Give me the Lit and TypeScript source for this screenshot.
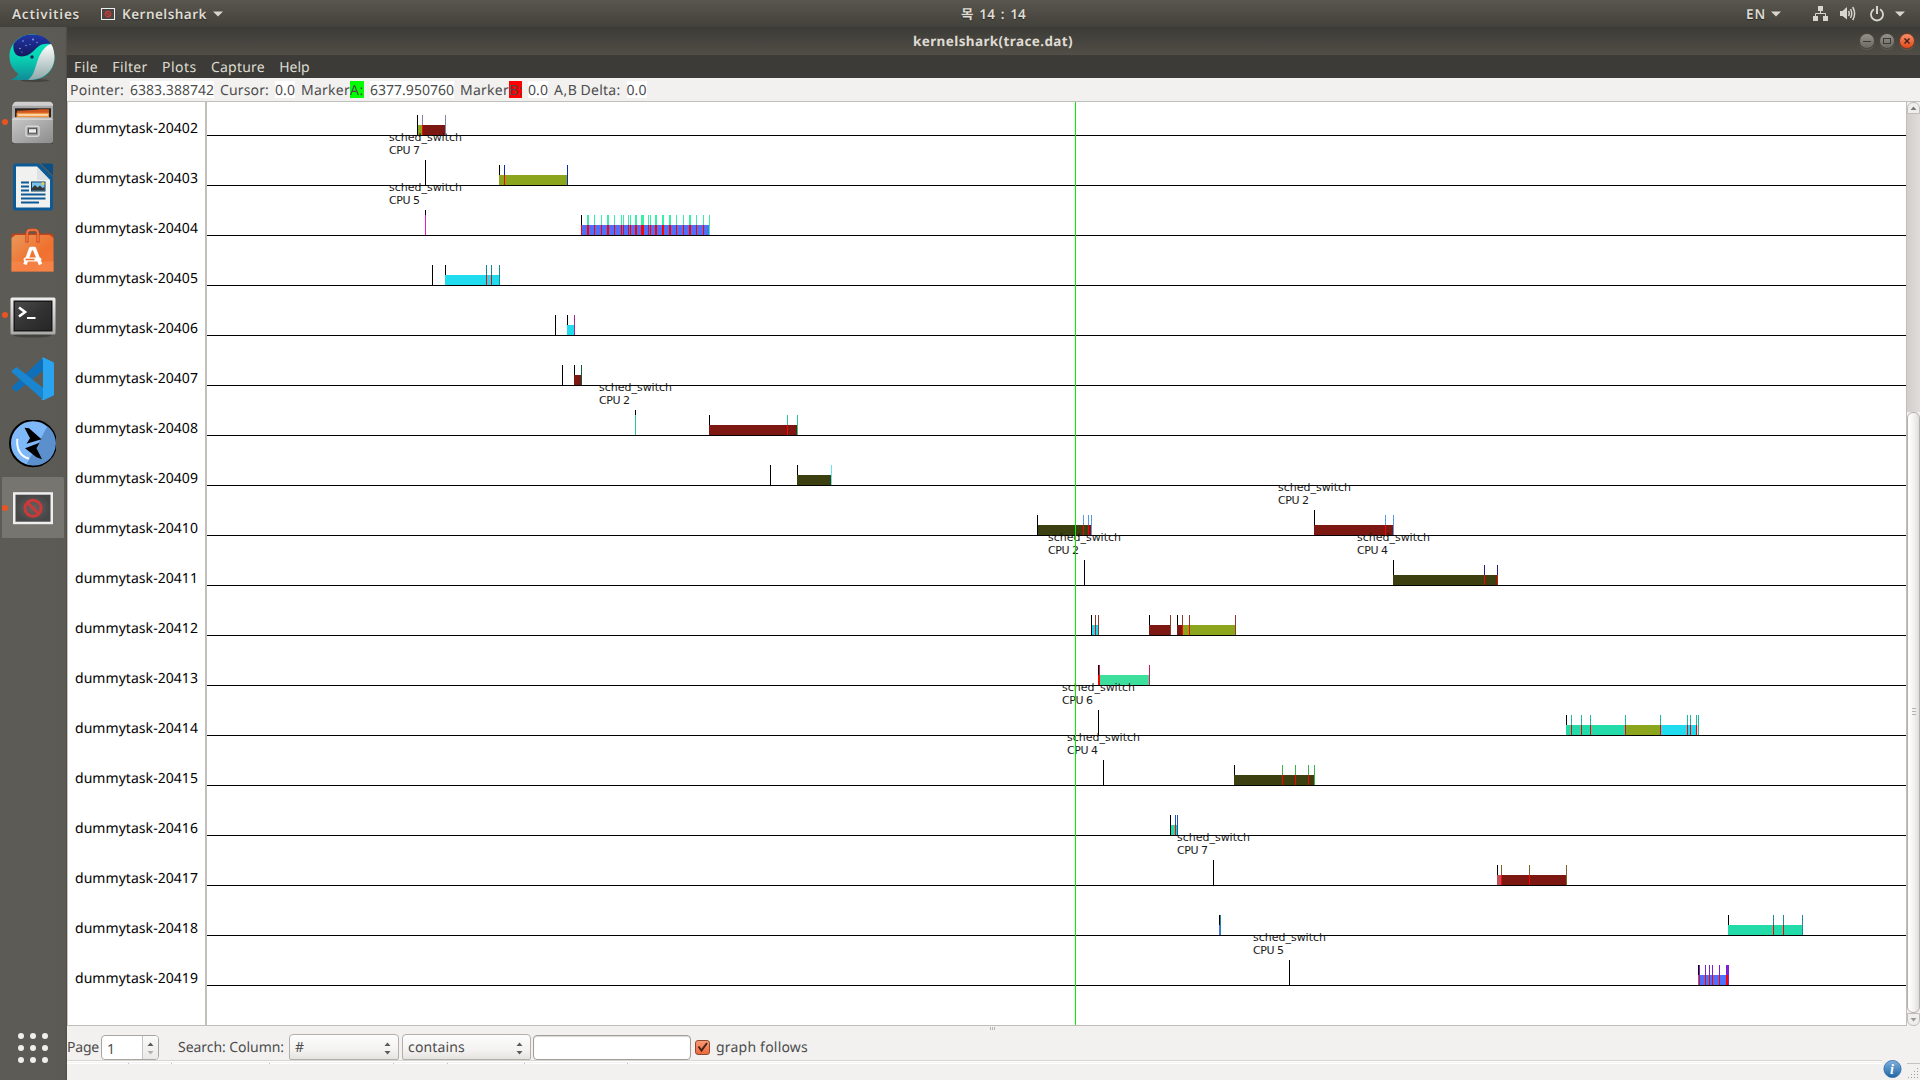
import { LitElement, html, svg, css } from "lit";
import { customElement, property } from "lit/decorators.js";

/** Text run whose tracking is adjusted so that it takes a given width. */
@customElement("fit-text")
class FitText extends LitElement {
  static styles = css`
    :host { display: block; flex: none; white-space: pre; text-rendering: geometricPrecision; }
    .run { display: inline-block; }
  `;
  @property() text = "";
  @property({ type: Number }) w = 0;
  render() { return html`<span class="run">${this.text}</span>`; }
  updated() {
    const run = this.renderRoot.querySelector(".run") as HTMLElement;
    const n = this.text.length;
    const natural = run.getBoundingClientRect().width;
    this.style.width = `${this.w}px`;
    run.style.letterSpacing = `${(this.w - natural) / n}px`;
  }
}

const fit = (text: string, w: number, cls = "") => html`<fit-text class=${cls} .text=${text} .w=${w}></fit-text>`;

const DARKRED = "#7d1712", OLIVE = "#8ba51d", BLUE = "#5070fa", CYAN = "#20dcee", MOSS = "#3c3f10", MINT = "#22dba8";

/** [x, width, colour] */
type Bar = [number, number, string];
type Row = {
  bars?: Bar[];
  black?: number[];      // start ticks, upper half
  full?: number[];       // black, full height
  tall?: number[];       // black, reaching up to a label
  color?: string;        // task colour
  mid?: (number | [number, number])[]; // task colour above, red below
  end?: number[];        // task colour, full height
  labels?: [number, string][];
  extra?: [number, number, number, number, string][]; // x, dy, w, h, fill
};

const ROWS: Row[] = [
  { bars: [[418, 4, OLIVE], [423, 22, DARKRED]], full: [417], color: "#7f86a8", mid: [422], end: [445] },
  { labels: [[389, "7"]], tall: [425], bars: [[499, 68, OLIVE]], black: [499], color: "#0a2ab0", mid: [504], end: [567] },
  { labels: [[389, "5"]], extra: [[425, -25, 1, 5, "#000"], [425, -20, 1, 20, "#e619d8"], [581, -10, 1, 10, "#f00"]],
    bars: [[581, 128, BLUE]], black: [581], color: "#36f0a4",
    mid: [[587, 2], 594, 601, [607, 2], 614, 621, 623, 628, 630, [635, 2], [641, 3], 648, 650, [655, 2], [662, 2], [669, 2], 676, 683, [689, 2], 696, 703],
    end: [709] },
  { full: [432], black: [445], bars: [[445, 54, CYAN]], color: "#128a90", mid: [486, 491], end: [499] },
  { full: [555], black: [567], bars: [[567, 7, CYAN]], color: "#a02a92", end: [574] },
  { full: [562], black: [574], bars: [[574, 7, DARKRED]], color: "#0f5c44", end: [581] },
  { labels: [[599, "2"]], extra: [[635, -25, 1, 5, "#000"]], black: [709], bars: [[709, 88, DARKRED]], color: "#22cc90", mid: [787], end: [635, 797] },
  { full: [770], black: [797], bars: [[797, 34, MOSS]], color: "#62e6ec", end: [831] },
  { full: [1037], labels: [[1278, "2"]], bars: [[1038, 51, MOSS], [1089, 2, DARKRED], [1314, 79, DARKRED]], extra: [[1314, -25, 1, 15, "#000"]],
    color: "#5a96e2", mid: [1083, 1088, 1385], end: [1091, 1393] },
  { labels: [[1048, "2"], [1357, "4"]], tall: [1084], extra: [[1393, -25, 1, 15, "#000"]], bars: [[1393, 104, MOSS]], color: "#1c1f86", mid: [1484, 1497] },
  { full: [1091], black: [1149, 1177], bars: [[1092, 6, CYAN], [1149, 21, DARKRED], [1177, 6, DARKRED], [1183, 52, OLIVE]],
    color: "#8c3a2a", mid: [1095, 1182, 1189], end: [1098, 1170, 1235] },
  { black: [1098], bars: [[1100, 49, "#3cdf9c"]], color: "#d01c52", mid: [1099], end: [1149], extra: [[1098, -10, 2, 10, "#f00"]] },
  { labels: [[1062, "6"]], tall: [1098], black: [1566], bars: [[1566, 59, MINT], [1626, 34, OLIVE], [1660, 37, CYAN], [1697, 1, "#c8e8e8"]],
    color: "#20b89a", mid: [1571, 1581, 1590, 1625, 1660, 1687, 1690, 1696], end: [1698] },
  { labels: [[1067, "4"]], tall: [1103], black: [1234], bars: [[1234, 80, MOSS]], color: "#3cb444", mid: [1282, 1295, 1308], end: [1314] },
  { full: [1170], bars: [[1171, 6, MINT]], color: "#2050c0", mid: [1175], end: [1177] },
  { labels: [[1177, "7"]], tall: [1213], black: [1497], bars: [[1497, 4, "#c0505a"], [1502, 64, DARKRED]], color: "#80602c", mid: [1501, 1529], end: [1566] },
  { black: [1219, 1728], bars: [[1219, 1, BLUE], [1728, 74, MINT]], color: "#208aa0", mid: [1773, 1783], end: [1220, 1802] },
  { labels: [[1253, "5"]], tall: [1289], black: [1698], bars: [[1698, 30, BLUE]], color: "#7a22d2", mid: [1699, 1705, 1709, 1712, 1719, [1726, 2]], end: [1728] },
];

const rect = (x: number, y: number, w: number, h: number, f: string) =>
  svg`<rect x=${x} y=${y} width=${w} height=${h} fill=${f} />`;

function plotRow(r: Row, i: number) {
  const b = 135 + i * 50;
  const c = r.color ?? "#000";
  return svg`
    ${(r.bars ?? []).map(([x, w, f]) => rect(x, b - 10, w, 10, f))}
    ${(r.mid ?? []).map((m) => {
      const [x, w] = Array.isArray(m) ? m : [m, 1];
      return svg`${rect(x, b - 20, w, 10, c)}${rect(x, b - 10, w, 10, "#f00")}`;
    })}
    ${(r.end ?? []).map((x) => rect(x, b - 20, 1, 20, c))}
    ${(r.black ?? []).map((x) => rect(x, b - 20, 1, 10, "#000"))}
    ${(r.full ?? []).map((x) => rect(x, b - 20, 1, 20, "#000"))}
    ${(r.tall ?? []).map((x) => rect(x, b - 25, 1, 25, "#000"))}
    ${(r.extra ?? []).map(([x, dy, w, h, f]) => rect(x, b + dy, w, h, f))}
    ${rect(207, b, 1699, 1, "#000")}
    ${(r.labels ?? []).map(([x, n]) => svg`
      <text class="ev" x=${x} y=${b - 44} textLength="73">sched_switch</text>
      <text class="ev" x=${x} y=${b - 31} textLength="31">CPU ${n}</text>`)}
  `;
}

const whale = html`<svg width="48" height="48" viewBox="0 0.5 48 48">
  <defs><linearGradient id="wt" x1="0" y1="0" x2="0" y2="1"><stop offset="0" stop-color="#05f0c0"/><stop offset=".55" stop-color="#08cdb2"/><stop offset="1" stop-color="#128a96"/></linearGradient>
  <linearGradient id="wn" x1="0" y1="0" x2="0" y2="1"><stop offset="0" stop-color="#2036a8"/><stop offset="1" stop-color="#15195c"/></linearGradient>
  <linearGradient id="ww" x1="0" y1="0" x2="0" y2="1"><stop offset="0" stop-color="#fff"/><stop offset="1" stop-color="#8fa8a8"/></linearGradient></defs>
  <ellipse cx="27" cy="47" rx="14" ry="1.4" fill="#44433f"/>
  <path d="M1.5 23C1.500 10 11.500 1 24 1s22.500 10 22.500 23S37 46.500 24 46.500H2C6 45.500 9.500 43 10 40C4.500 36 1.500 30 1.500 23Z" fill="url(#wt)"/>
  <path d="M46 19C47 25 46.500 31 42 37C37 43 31 46.500 20 46.500C27 41 27 33 30 26C33 18 38 11.500 43 10.500C45 13 45.500 16 46 19Z" fill="url(#ww)"/>
  <path d="M5.500 10.500C10 4 17 1 24 1C32 1 39 4 43 10.500C33 9 30 13 25 18C20 23 12 24.500 8 21C5.500 18.500 5 14 5.500 10.500Z" fill="url(#wn)"/>
  <circle cx="24" cy="23.500" r="1.700" fill="#162358"/>
  <g fill="#8ba8f0"><circle cx="15" cy="7.500" r=".8"/><circle cx="25" cy="6" r=".9"/><circle cx="18" cy="12" r=".7"/><circle cx="12" cy="15" r=".8"/><circle cx="22" cy="11" r=".6"/><circle cx="29" cy="9" r=".7"/><circle cx="14" cy="18.500" r=".6"/></g>
</svg>`;

const files = html`<svg width="48" height="48" viewBox="0 -0.700 48 48">
  <defs><linearGradient id="fg" x1="0" y1="0" x2="1" y2="1"><stop offset="0" stop-color="#c9c9c9"/><stop offset="1" stop-color="#8c8c8c"/></linearGradient></defs>
  <path d="M4 42h41v3H4z" fill="#3e3d3a" opacity=".6"/>
  <path d="M5 5.500Q5.500 3 8 3H42Q44 3 45 5.500V26H4V7Z" fill="#cfcfcf"/>
  <path d="M4 7H45V43H4Z" fill="#a7a7a7"/>
  <path d="M7 9.500H43V21H7Z" fill="#282522"/>
  <path d="M9 12L29 11L31 10.500H41V20H9Z" fill="#d1561e"/><path d="M8.500 14H41V20H8.500Z" fill="#f09444"/><path d="M10 15.500H40V17H10Z" fill="#ffe6c4"/>
  <path d="M5.500 18.500H43.500L45 20.500V41.500Q45 44.500 42 44.500H7Q4 44.500 4 41.500V20.500Z" fill="url(#fg)"/>
  <path d="M5 20.500H44" stroke="#dedede" stroke-width="1.200"/>
  <rect x="18" y="27.500" width="13" height="10" rx="2" fill="#999" stroke="#d8d8d8" stroke-width="1.400"/>
  <rect x="20.500" y="30" width="8" height="4.500" fill="#eee" stroke="#4b4b4b" stroke-width="1"/>
</svg>`;

const writer = html`<svg width="48" height="48" viewBox="0 0 48 48">
  <path d="M7 0.500H31L45 14V45Q45 47.500 42.500 47.500H7.500Q5 47.500 5 45V3Q5 .5 7 .5Z" fill="#0d5a96"/>
  <path d="M33 .5H43Q45 .5 45 2.500V12.500Z" fill="#0a4f86"/>
  <path d="M8 3.500H29L42 17V44.500H8Z" fill="#f1f1ef"/>
  <path d="M29 3.500V17H42Z" fill="#d2d7da" opacity=".6"/>
  <g fill="#0d5a96"><path d="M13 18.500h8v2h-8zM13 22.500h8v2h-8zM13 26.500h8v2h-8zM13 30.500h24.500v2H13zM13 34.500h24.500v2H13zM13 38.500h18v2H13z"/></g>
  <rect x="23" y="18.500" width="14.500" height="10" fill="#0d4470"/><rect x="24" y="19.500" width="12.500" height="8" fill="#7cc3ea"/>
  <path d="M24 27.500V25l3-3 2.500 2.500L32 22.500l2.500 2.500L36.500 24v3.500Z" fill="#33383a"/><circle cx="35" cy="20.500" r="1.500" fill="#e8c94a"/>
</svg>`;

const software = html`<svg width="48" height="48" viewBox="0.500 0.500 48 48">
  <defs><linearGradient id="sg" x1="0" y1="0" x2="1" y2="1"><stop offset="0" stop-color="#e8985a"/><stop offset=".6" stop-color="#f0702e"/><stop offset="1" stop-color="#f47a3c"/></linearGradient></defs>
  <path d="M4 8L7 7H42L46 8V12H4Z" fill="#c2431a"/>
  <path d="M4 11.500L8 8.500H42L46 11.500V45H4Z" fill="url(#sg)"/><path d="M4 35H46V45H4Z" fill="#f88a50" opacity=".6"/>
  <path d="M19.500 16V8Q19.500 3.500 22.500 3.500H27.500Q30.500 3.500 30.500 8V16" fill="none" stroke="#c9481c" stroke-width="3.200"/><path d="M19.500 15V8Q19.500 3.500 22.500 3.500H27.500Q30.500 3.500 30.500 8V15" fill="none" stroke="#f07c48" stroke-width="1.500"/>
  <path d="M17.500 38L23.200 22H26.800L33 38" fill="none" stroke="#fff" stroke-width="3.600" stroke-linejoin="round"/>
  <rect x="16" y="31" width="18" height="4" rx="2" fill="#fff"/><rect x="18" y="32.200" width="9" height="1.600" fill="#f0702e"/>
</svg>`;

const terminal = html`<svg width="48" height="48" viewBox="0 -1.500 48 48">
  <defs><linearGradient id="tg" x1="0" y1="0" x2="0" y2="1"><stop offset="0" stop-color="#eee"/><stop offset="1" stop-color="#a9a9a9"/></linearGradient>
  <linearGradient id="ts" x1="0" y1="0" x2="1" y2="1"><stop offset="0" stop-color="#4a4a4a"/><stop offset=".5" stop-color="#333"/><stop offset="1" stop-color="#262626"/></linearGradient></defs>
  <ellipse cx="24.500" cy="43" rx="19" ry="2" fill="#43423e"/>
  <rect x="2.500" y="5" width="45" height="37" rx="1.500" fill="url(#tg)"/><rect x="5.500" y="8" width="39" height="31" fill="#181818"/>
  <rect x="7" y="9.500" width="36" height="28" fill="url(#ts)"/>
  <path d="M11 15L17 19.500L11 24" fill="none" stroke="#fff" stroke-width="2.600"/><path d="M19 25.500H27.500" stroke="#fff" stroke-width="2"/>
</svg>`;

const code = html`<svg width="48" height="48" viewBox="0 1.300 48 48">
  <path d="M35 2.800L4 32Q3.500 33 4.200 33.700L7.500 36.500Q8.500 37 9.500 36.300L35 16Z" fill="#0f6fb8"/>
  <path d="M35 45L4 17.500Q3.500 16.500 4.200 15.500L7.500 13Q8.500 12.300 9.500 13L35 33Z" fill="#1a86d0"/>
  <path d="M33.500 3.200Q35 2.500 36 3L45 7.300Q46 8 46 9V39.500Q46 40.500 45 41L36 45.200Q34 45.600 33 44.500Q35 45 35 42.500V6Q35 4 33.500 3.200Z" fill="#2ba4f0"/>
</svg>`;

const power = html`<svg width="48" height="48" viewBox="-0.500 1.200 48 48">
  <circle cx="24.500" cy="24.500" r="23" fill="#7fb8f8" stroke="#000" stroke-width="2"/><path d="M39 7.500A22 22 0 0 1 18 45.500Z" fill="#5b90cc"/>
  <path d="M16 9L20.500 9.500L33 20.500L18 25L21.500 19.500Z" fill="#000"/><path d="M33.500 40.500L28 38.500L16.500 29.500L31 24L28 29.500Z" fill="#000"/>
  <path d="M8.800 20Q7.500 36 20.500 40" fill="none" stroke="#fff" stroke-width="2"/>
</svg>`;

const shark = html`<svg width="48" height="48" viewBox="0 0.300 48 48">
  <defs><radialGradient id="kg"><stop offset="0" stop-color="#646464"/><stop offset="1" stop-color="#464646"/></radialGradient></defs>
  <rect x="5" y="8.500" width="40" height="32" fill="#eee"/><rect x="7.500" y="11" width="35" height="27" fill="url(#kg)"/>
  <circle cx="25" cy="24.500" r="8" fill="none" stroke="#cd3838" stroke-width="3"/><path d="M19.500 19L30.500 30" stroke="#cd3838" stroke-width="3"/>
</svg>`;

const caret = html`<svg class="caret" width="10" height="6" viewBox="0 0 10 6"><path d="M0 .5H10L5 5.500Z" fill="#d8d5ce"/></svg>`;

const TASKS = ROWS.map((_, i) => `dummytask-${20402 + i}`);

@customElement("app-root")
class AppRoot extends LitElement {
  static styles = css`
    :host { display: block; width: 1920px; height: 1080px; overflow: hidden; font: 14px/20px "Noto Sans", "Open Sans", sans-serif; color: #4c4c4c; }
    * { box-sizing: border-box; }
    svg { display: block; flex: none; }
    .desktop { display: grid; grid-template: 27px 1053px / 67px 1853px; width: 1920px; height: 1080px; }
    .panel { grid-column: 1 / 3; display: grid; grid-template-columns: 961px 1fr auto; align-items: center; background: linear-gradient(#5a564e, #42413b); color: #dfdbd2; font-weight: 600; font-size: 13.5px; text-shadow: 0 1px 1px #2a2926; }
    .left, .tray { display: flex; align-items: center; height: 27px; }
    .left { padding-left: 12px; }
    .appicon { margin: 0 7px 0 21px; }
    .left .caret { margin-left: 6px; }
    .clock { font-family: "Noto Sans", "Noto Sans CJK KR", sans-serif; word-spacing: 2px; padding-top: 1px; }
    .tray { padding-right: 15px; }
    .tray .caret { margin-left: 5px; }
    .net { margin-left: 32px; } .vol { margin-left: 12px; } .pow { margin-left: 14px; } .tray .last { margin-left: 11px; }
    .dock { background: linear-gradient(90deg, #5d5b55, #5b5a54 65px, #4d4c48); display: flex; flex-direction: column; }
    .slot { height: 64.300px; width: 64px; display: flex; align-items: center; flex: none; }
    .slot:first-child { margin-top: -1px; }
    .slot .dot { width: 6px; height: 6px; border-radius: 3px; background: transparent; margin: 0 0 0 2px; flex: none; }
    .slot .on { background: #e95420; }
    .slot.active { background: linear-gradient(#77756f, #77756f) 2px 1px / 62px 61px no-repeat; border-radius: 4px; }
    .apps { margin: auto 0 17px 18px; display: grid; grid-template-columns: repeat(3, 6px); gap: 6px; }
    .apps i { width: 6px; height: 6px; border-radius: 3px; background: #f0efec; }
    .win { display: grid; grid-template-rows: 28px 23px 23px 925px 54px; background: #f2f1f0; min-width: 0; }
    .title { background: linear-gradient(#3c3b37, #504e46); display: flex; align-items: center; justify-content: flex-end; padding-right: 5px; color: #dfdbd2; font-weight: 700; font-size: 13.5px; }
    .title fit-text { margin-right: 782px; }
    .wb { width: 16px; height: 16px; margin-left: 4px; border-radius: 8px; background: linear-gradient(#94928a, #6b6962); border: 1px solid #4a4842; display: grid; place-items: center; box-shadow: 0 1px 0 #5f5d56; }
    .wb.close { background: linear-gradient(#f7906c, #e2491a); border-color: #7a3a22; }
    .menu { background: #3c3b37; color: #dfdbd2; display: flex; align-items: center; padding: 3px 0 0 7px; gap: 14.300px; }
    .info { display: flex; align-items: center; padding: 0 0 0 3px; border-bottom: 1px solid #c0bfbd; height: 24px; }
    .info fit-text { height: 17px; line-height: 19px; }
    .v { background: #fff; margin: 0 6px 0 6px; }
    .a { background: #00ff00; } .b { background: #ff0000; }
    .ab { margin-right: 3px; }
    .view { display: grid; grid-template-columns: 138px 2px 1699px 1px 13px; min-height: 0; padding-top: 1px; height: 925px; }
    .names { background: #fff; border-left: 1px solid #c6c2bc; color: #000; padding: 2px 0 0 7px; display: flex; flex-direction: column; border-bottom: 1px solid #c0bdb8; }
    .names fit-text { height: 50px; line-height: 50px; flex: none; }
    .div { background: #c2beb9; }
    .plot { background: #fff; border-bottom: 1px solid #c0bdb8; height: 924px; }
    .ev { font: 11px "DejaVu Sans", sans-serif; fill: #1a1a1a; }
    .scroll { display: grid; grid-template-rows: 12px 298px 1fr 13px; height: 924px; }
    .sbtn { background: #efeeec; border: 1px solid #c0bcb7; display: grid; place-items: center; }
    .sbtn.up { border-radius: 6px 6px 0 0; } .sbtn.dn { border-radius: 0 0 6px 6px; }
    .trough { background: linear-gradient(90deg, #d2cfcb, #dfddda); }
    .thumb { border: 1px solid #b4b0ab; border-radius: 6px; background: linear-gradient(90deg, #fff, #f4f3f1 50%, #e0deda); display: flex; flex-direction: column; gap: 2px; align-items: center; justify-content: center; padding-bottom: 2px; }
    .thumb i { width: 4px; height: 1px; background: #b5b1ac; }
    .bottom { display: grid; grid-template-rows: 7px 27px 3px 1fr; }
    .grip { display: flex; justify-content: center; gap: 1px; padding-top: 1px; margin-left: -2px; }
    .grip i { width: 1px; height: 3px; background: #b8b5b0; }
    .search { display: flex; align-items: center; padding-top: 1px; }
    .search fit-text { line-height: 22px; padding-top: 2px; }
    .spin { display: grid; grid-template-columns: 40px 1fr; width: 58px; height: 25px; border: 1px solid #a9a6a1; border-radius: 4px; background: #fff; overflow: hidden; margin: 0 19px 0 2px; }
    .spin span { padding-left: 5px; line-height: 25px; }
    .sb { border-left: 1px solid #c6c3be; background: linear-gradient(#fafafa, #e9e8e6); display: grid; place-items: center; }
    .combo { height: 26px; border: 1px solid #b3b0ab; border-radius: 4px 4px 2px 2px; background: linear-gradient(#fdfdfd, #f4f3f2 60%, #e6e4e1); display: flex; align-items: center; justify-content: space-between; padding: 2px 7px 0 5px; }
    .combo fit-text { padding-top: 0; }
    .c1 { width: 110px; margin: 0 3px 0 5px; } .c2 { width: 129px; margin-right: 2px; }
    .entry { width: 158px; height: 25px; border: 1px solid #a19e99; border-radius: 4px; background: #fff; margin-right: 4px; box-shadow: inset 0 1px 1px #dcdad7; }
    .check { width: 15px; height: 15px; border: 1px solid #8e4a30; border-radius: 3px; background: linear-gradient(#f89a78, #ee6a3c); margin-right: 6px; }
    .edge { border-top: 1px solid #d6d4d1; border-bottom: 1px solid #fff; width: 1815px; height: 2px; }
    .status { display: grid; grid-template-columns: 1817px 19px 1fr; }
    .corner { border-top: 1px solid #c5c3bf; margin-left: 4px; height: 17px; }
    .ii { margin-top: -3px; margin-left: -1px; }
  `;

  private slot_(icon: unknown, on = false, active = false) {
    return html`<div class="slot ${active ? "active" : ""}"><i class="dot ${on ? "on" : ""}"></i>${icon}</div>`;
  }

  render() {
    const arrows = (c = "#5a5a5a") => html`<svg width="7" height="13" viewBox="0 0 7 13"><path d="M.5 4L3.500 .5L6.500 4Z" fill="#5a5a5a"/><path d="M.5 9L3.500 12.500L6.500 9Z" fill=${c}/></svg>`;
    return html`
      <div class="desktop">
        <header class="panel">
          <div class="left">
            ${fit("Activities", 68)}
            <svg class="appicon" width="14" height="12" viewBox="0 0 14 12"><rect width="14" height="12" fill="#eee"/><rect x="1" y="1" width="12" height="10" fill="#484644"/><circle cx="7" cy="6" r="2.700" fill="none" stroke="#c83a32" stroke-width="1.300"/><path d="M5 4L9 8" stroke="#c83a32" stroke-width="1.300"/></svg>
            ${fit("Kernelshark", 85)}${caret}
          </div>
          <div>${fit("목 14 : 14", 65, "clock")}</div>
          <div class="tray">
            ${fit("EN", 20)}${caret}
            <svg class="net" width="15" height="15" viewBox="0 0 15 15"><path d="M5 0h5v5H5zM0 10h5v5H0zM10 10h5v5h-5z" fill="#d8d5ce"/><path d="M7.500 5V7.500M2.500 10V7.500H12.500V10" fill="none" stroke="#d8d5ce"/></svg>
            <svg class="vol" width="16" height="15" viewBox="0 0 16 15"><path d="M0 5H2.500L7 1V13.500L2.500 10H0Z" fill="#d8d5ce"/><path d="M8.500 5Q10 7.500 8.500 10M10.500 3Q13 7.500 10.500 12M12.700 1Q16.500 7.500 12.700 14" fill="none" stroke="#d8d5ce" stroke-width="1.500"/></svg>
            <svg class="pow" width="14" height="16" viewBox="0 0 14 16"><path d="M4 3.300A6 6 0 1 0 10 3.300" fill="none" stroke="#d8d5ce" stroke-width="1.800"/><path d="M7 0V8" stroke="#d8d5ce" stroke-width="2"/></svg>
            <svg class="last" width="10" height="6" viewBox="0 0 10 6"><path d="M0 .5H10L5 5.500Z" fill="#d8d5ce"/></svg>
          </div>
        </header>
        <nav class="dock">
          ${this.slot_(whale)}${this.slot_(files, true)}${this.slot_(writer)}${this.slot_(software)}
          ${this.slot_(terminal, true)}${this.slot_(code)}${this.slot_(power)}${this.slot_(shark, true, true)}
          <div class="apps">${Array.from({ length: 9 }, () => html`<i></i>`)}</div>
        </nav>
        <main class="win">
          <div class="title">
            ${fit("kernelshark(trace.dat)", 160)}
            <span class="wb"><svg width="8" height="8"><path d="M0 4.500H8" stroke="#3c3b37"/></svg></span>
            <span class="wb"><svg width="8" height="8"><rect x=".5" y="1.500" width="7" height="5" fill="none" stroke="#3c3b37"/></svg></span>
            <span class="wb close"><svg width="8" height="8"><path d="M1.500 1.500L6.500 6.500M6.500 1.500L1.500 6.500" stroke="#3c2018" stroke-width="1.400"/></svg></span>
          </div>
          <div class="menu">${fit("File", 24)}${fit("Filter", 35.500)}${fit("Plots", 34.500)}${fit("Capture", 54)}${fit("Help", 30.500)}</div>
          <div class="info">
            ${fit("Pointer:", 54)}${fit("6383.388742", 84, "v")}${fit("Cursor:", 49)}${fit("0.0", 20, "v")}
            ${fit("Marker", 49)}${fit("A:", 14, "a")}${fit("6377.950760", 84, "v")}
            ${fit("Marker", 49)}${fit("B:", 13, "b")}${fit("0.0", 20, "v")}
            ${fit("A,B", 23.500, "ab")}${fit("Delta:", 40)}${fit("0.0", 20, "v")}
          </div>
          <div class="view">
            <div class="names">${TASKS.map((t) => fit(t, 123))}</div>
            <div class="div"></div>
            <div class="plot">
              <svg width="1699" height="923" viewBox="207 102 1699 923">
                ${ROWS.map(plotRow)}
                ${rect(1075, 102, 1, 923, "#00f000")}
              </svg>
            </div>
            <div class="div"></div>
            <div class="scroll">
              <div class="sbtn up"><svg width="7" height="4"><path d="M.5 4L3.500 .5L6.500 4Z" fill="#777"/></svg></div>
              <div class="trough"></div>
              <div class="thumb"><i></i><i></i><i></i></div>
              <div class="sbtn dn"><svg width="7" height="4"><path d="M.5 0L3.500 3.500L6.500 0Z" fill="#999"/></svg></div>
            </div>
          </div>
          <div class="bottom">
            <div class="grip"><i></i><i></i><i></i></div>
            <div class="search">
              ${fit("Page", 32)}
              <div class="spin"><span>1</span><div class="sb">${arrows("#b0b0b0")}</div></div>
              ${fit("Search: Column:", 106)}
              <div class="combo c1">${fit("#", 9)}${arrows()}</div>
              <div class="combo c2">${fit("contains", 57)}${arrows()}</div>
              <div class="entry"></div>
              <div class="check"><svg width="13" height="13" viewBox="0 0 13 13"><path d="M2.500 5.500L5.500 9.500L11 2" fill="none" stroke="#4a2618" stroke-width="2"/></svg></div>
              ${fit("graph follows", 92)}
            </div>
            <div class="edge"></div>
            <div class="status">
              <svg width="1815" height="2">${rect(0, 0, 1815, 1, "#fff")}${[61, 104, 202, 326, 380, 457, 560].map((x) => rect(x, 0, 1, 1, "#c0bdb8"))}</svg>
              <svg class="ii" width="19" height="18" viewBox="0 0 19 18"><defs><linearGradient id="ig" x1="0" y1="0" x2="0" y2="1"><stop offset="0" stop-color="#7fb0de"/><stop offset="1" stop-color="#1f66a6"/></linearGradient></defs><circle cx="9.500" cy="9" r="8.600" fill="url(#ig)" stroke="#2c6cab" stroke-width=".8"/><text x="9" y="13.500" text-anchor="middle" font-family="Liberation Serif, serif" font-weight="bold" font-style="italic" font-size="14" fill="#fff">i</text></svg>
              <div class="corner"><svg width="13" height="16">${[0, 1, 2, 3].map((r) => [0, 1, 2, 3].filter((c) => c >= 3 - r).map((c) => rect(1 + c * 3, 4 + r * 3, 1, 1, "#a09d98")))}</svg></div>
            </div>
          </div>
        </main>
      </div>`;
  }
}
